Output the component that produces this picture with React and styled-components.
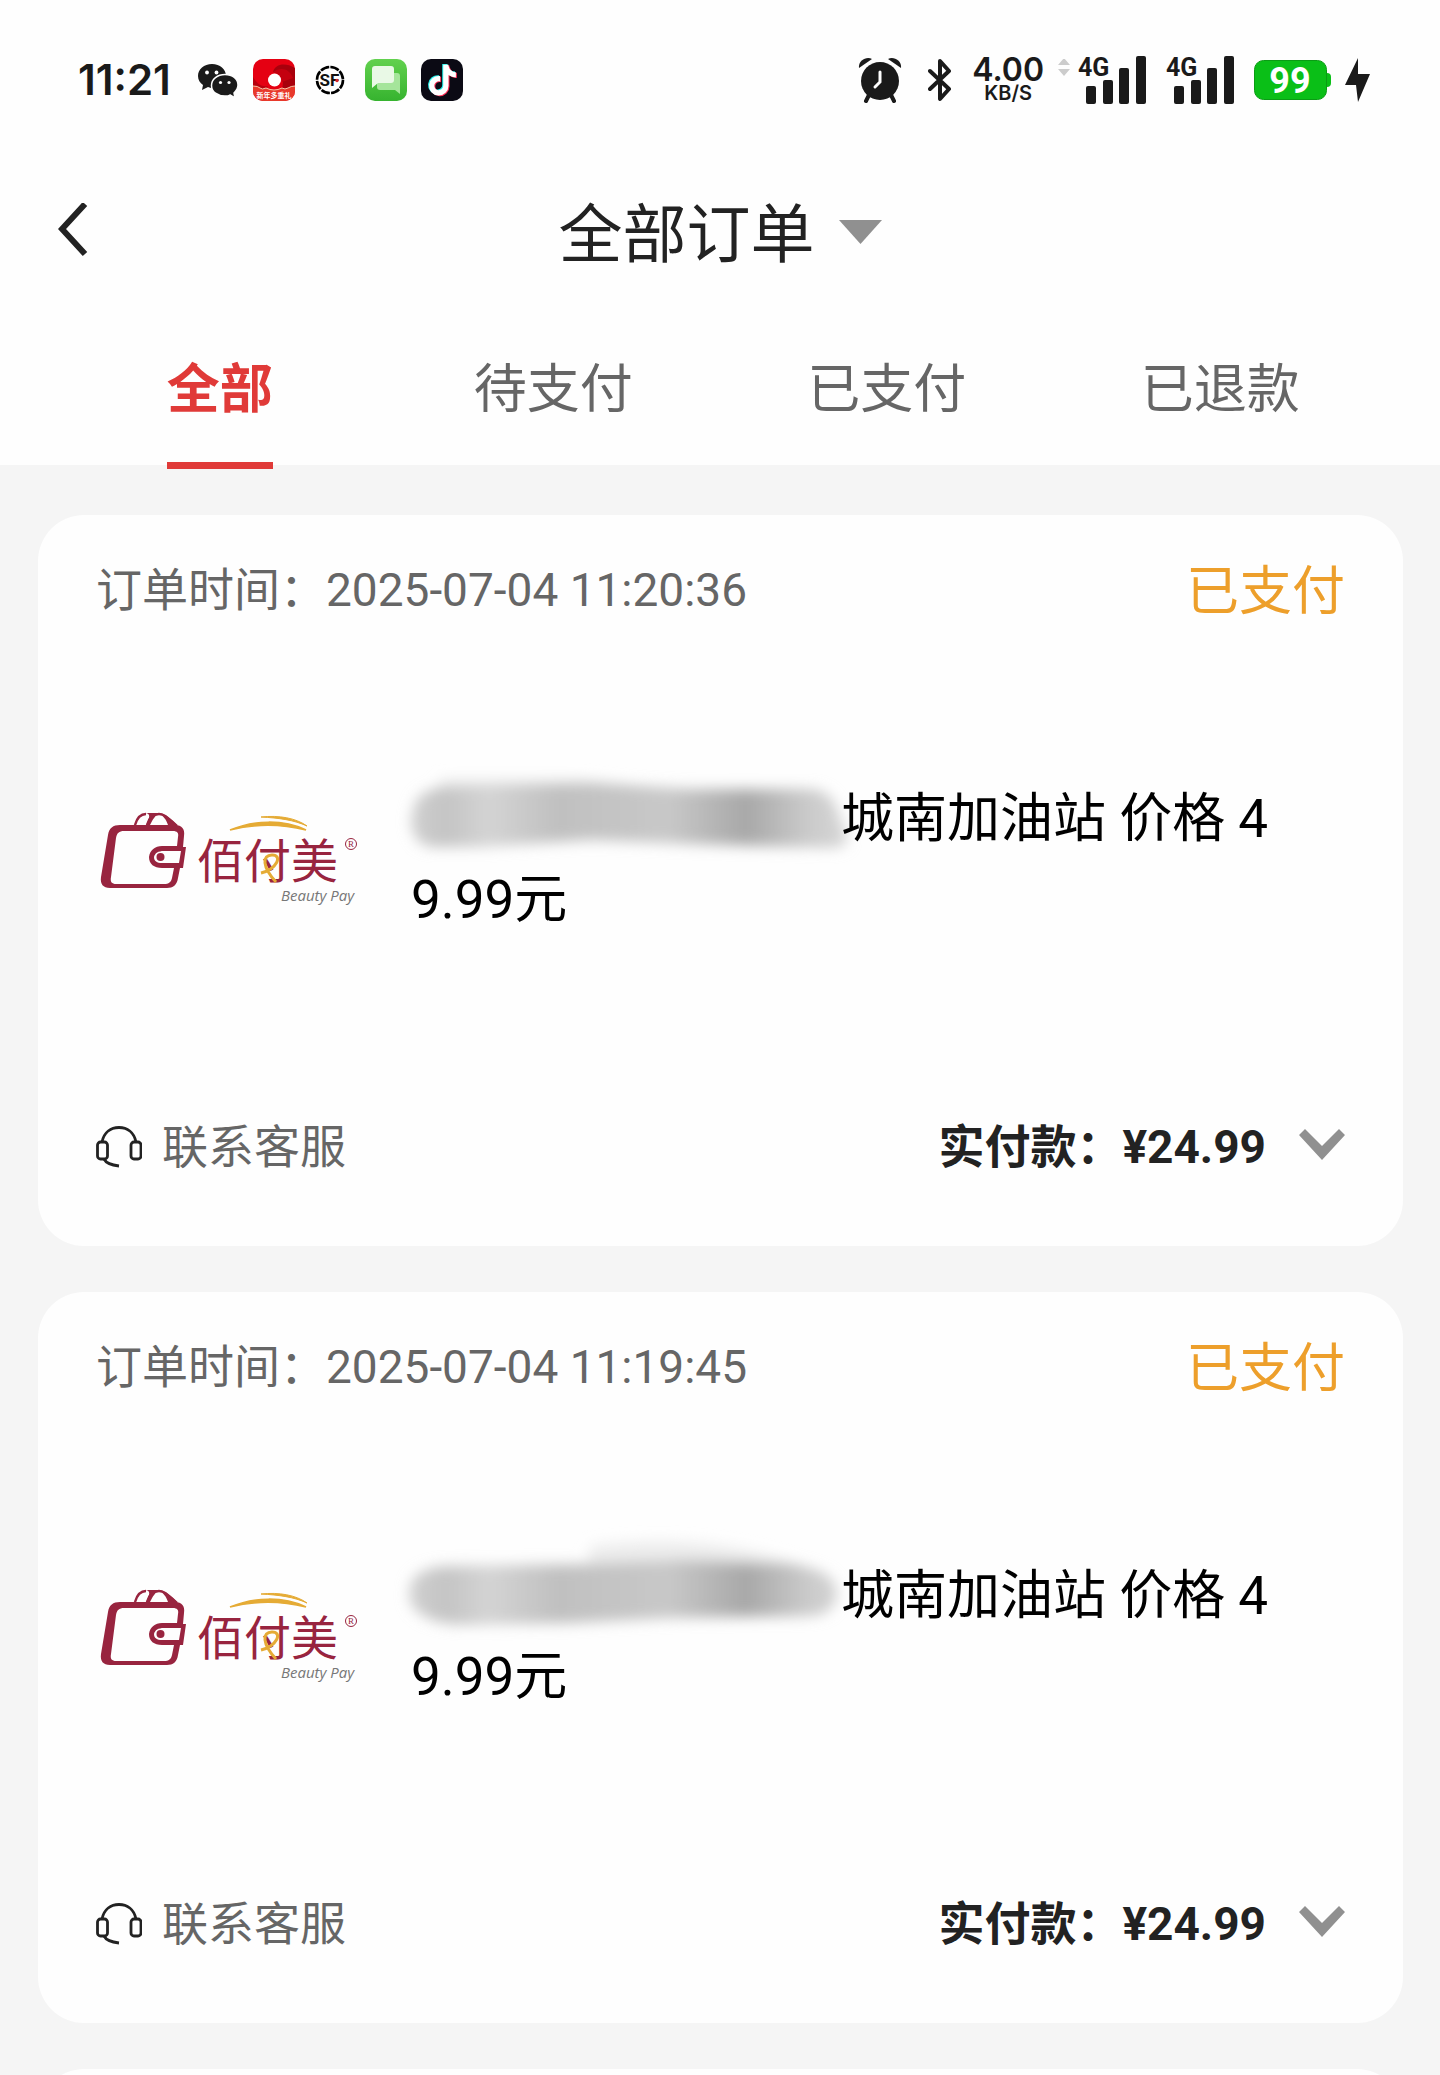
import React, { useState } from 'react'
import styled, { createGlobalStyle } from 'styled-components'

const GlobalStyle = createGlobalStyle`
  * {
    box-sizing: border-box;
  }
  body {
    margin: 0;
    background: #f5f5f5;
    font-family: Roboto, "Noto Sans CJK SC", sans-serif;
  }
  button {
    border: 0;
    padding: 0;
    background: none;
    font: inherit;
    color: inherit;
    cursor: pointer;
  }
  svg {
    display: block;
    flex-shrink: 0;
  }
`

const Page = styled.div`
  height: 100vh;
  display: flex;
  flex-direction: column;
  overflow: hidden;
`

const Header = styled.header`
  flex-shrink: 0;
  background: #fefefe;
`

const StatusBar = styled.div`
  display: flex;
  align-items: center;
  justify-content: space-between;
  height: 160px;
  padding: 0 70px 0 78px;
  font-family: Inter, sans-serif;
  color: #1a1a1a;
`

const StatusGroup = styled.div`
  display: flex;
  align-items: center;
  gap: ${({ $gap }) => $gap}px;
`

const Clock = styled.time`
  margin-right: 12px;
  font-size: 42px;
  font-weight: 600;
  line-height: 48px;
`

const NetSpeed = styled.div`
  display: flex;
  flex-direction: column;
  align-items: center;
  font-weight: 600;
`

const SpeedValue = styled.span`
  font-size: 32px;
  line-height: 26px;
`

const SpeedUnit = styled.span`
  font-size: 20px;
  line-height: 20px;
`

const NavBar = styled.div`
  display: grid;
  grid-template-columns: 1fr auto 1fr;
  align-items: center;
  height: 146px;
  padding: 0 58px;
`

const BackButton = styled.button`
  justify-self: start;
`

const Title = styled.h1`
  margin: 0;
  padding-top: 6px;
  font-size: 64px;
  font-weight: 400;
  line-height: 80px;
  color: #222;
`

const TitleButton = styled.button`
  display: flex;
  align-items: center;
  gap: 24px;

  svg {
    margin-bottom: 8px;
  }
`

const Tabs = styled.div`
  display: grid;
  grid-template-columns: repeat(4, 1fr);
  justify-items: center;
  padding: 0 53px;
`

const Tab = styled.button`
  position: relative;
  height: 159px;
  padding-bottom: 2px;
  font-size: 53px;
  font-weight: ${({ $active }) => ($active ? 700 : 400)};
  color: ${({ $active }) => ($active ? '#e03a38' : '#666')};

  &::after {
    content: "";
    display: ${({ $active }) => ($active ? 'block' : 'none')};
    position: absolute;
    left: 0;
    right: 0;
    bottom: -4px;
    height: 7px;
    background: #e03a38;
  }
`

const OrderList = styled.main`
  flex: 1;
  display: flex;
  flex-direction: column;
  gap: 46px;
  min-height: 0;
  padding: 50px 37px 0 38px;
  overflow: hidden;
`

const Card = styled.article`
  flex-shrink: 0;
  min-height: 731px;
  padding: 36px 58px 60px;
  border-radius: 46px;
  background: #fefefe;
`

const CardRow = styled.div`
  display: flex;
  align-items: center;
  justify-content: space-between;
  font-size: 46px;
  line-height: 78px;
  color: #666;
`

const OrderStatus = styled.span`
  padding-top: 4px;
  font-size: 53px;
  line-height: 74px;
  color: #ed9f2b;
`

const Product = styled.div`
  display: flex;
  align-items: center;
  gap: 53px;
  min-height: 260px;
  margin: 101px 0 118px;
`

const ProductName = styled.p`
  flex: 1;
  margin: 0;
  padding-right: 58px;
  font-size: 53px;
  line-height: 81px;
  word-break: break-all;
  color: #000;

  svg {
    display: inline-block;
    vertical-align: middle;
    overflow: visible;
  }
`

const ServiceButton = styled.button`
  display: flex;
  align-items: center;
  gap: 20px;
`

const PaidButton = styled.button`
  display: flex;
  align-items: center;
  gap: 33px;
  font-weight: 700;
  color: #222;

  svg {
    margin-bottom: 6px;
  }
`

const WechatIcon = () => (
  <svg width="42" height="42" viewBox="0 0 42 42" fill="#1a1a1a">
    <path d="M15 5C7 5 1 10 1 17c0 4 2 7 5 9l-1 5 6-3c2 1 4 1 6 1C24 28 29 24 29 17S23 5 15 5z" />
    <path d="M28 15.500C20.500 15.500 14.500 20 14.500 26.500S20.500 37 28 37c2 0 3.500 0 5-1l5 3-1-5c2-2 4-4.500 4-8C41 20 35.500 15.500 28 15.500z" stroke="#fefefe" strokeWidth="1.500" />
    <circle cx="10" cy="13.500" r="1.900" fill="#fefefe" />
    <circle cx="19.500" cy="13.500" r="1.900" fill="#fefefe" />
    <circle cx="23.500" cy="23.500" r="1.600" fill="#fefefe" />
    <circle cx="32" cy="23.500" r="1.600" fill="#fefefe" />
  </svg>
)

const PromoIcon = () => (
  <svg width="42" height="42" viewBox="0 0 42 42">
    <clipPath id="promo-clip"><rect width="42" height="42" rx="10" /></clipPath>
    <g clipPath="url(#promo-clip)">
      <rect width="42" height="42" fill="#e50012" />
      <path d="M20 13C22 5 32 3 42 9v20H29c3-7-1-14-9-16z" fill="#a8000c" />
      <path d="M20 13c8-6 17-3 20 6l-11 4c0-5-4-9-9-10z" fill="#c4000f" />
      <path d="M0 18c5 8 9 10 15 9l-3 4H0z" fill="#b8000e" />
      <path d="M0 27q5 0 7 2t6 0q8 4 16 0 3 2 6 0t7-2v15H0z" fill="#e8392b" />
      <path d="M0 27q5 0 7 2t6 0q8 4 16 0 3 2 6 0t7-2" fill="none" stroke="#f5c7a9" strokeWidth="1" />
      <circle cx="21.500" cy="21" r="6.500" fill="#fff" />
      <text x="21" y="39" textAnchor="middle" fontSize="7" fontWeight="700" fontFamily="Noto Sans CJK SC" fill="#fff">新年多重礼</text>
    </g>
  </svg>
)

const SfIcon = () => (
  <svg width="42" height="42" viewBox="0 0 42 42">
    <circle cx="21" cy="21" r="13" fill="none" stroke="#000" strokeWidth="2.600" strokeDasharray="9 1.210" />
    <text x="20.500" y="27" textAnchor="middle" fontSize="17" fontWeight="700" fontFamily="Roboto" fill="#111">SF</text>
    <circle cx="28" cy="21.500" r="1.700" fill="#d8232a" />
  </svg>
)

const MessageIcon = () => (
  <svg width="42" height="42" viewBox="0 0 42 42">
    <defs>
      <linearGradient id="msg" x1="0" y1="0" x2="0" y2="1">
        <stop offset="0" stopColor="#62d14e" />
        <stop offset="1" stopColor="#36b32f" />
      </linearGradient>
    </defs>
    <rect width="42" height="42" rx="10" fill="url(#msg)" />
    <path d="M15 14h17a3 3 0 0 1 3 3v18l-5-4H15a3 3 0 0 1-3-3V17a3 3 0 0 1 3-3z" fill="#a5e59b" />
    <path d="M10 7h16a3 3 0 0 1 3 3v11a3 3 0 0 1-3 3H13l-6 5V10a3 3 0 0 1 3-3z" fill="#e9f9e6" />
  </svg>
)

const NOTE = 'M448 209.910a210.060 210.060 0 0 1-122.770-39.250V349.380A162.550 162.550 0 1 1 185 188.310V278.200a74.620 74.620 0 1 0 52.230 71.180V0h88a121.180 121.180 0 0 0 1.860 22.170A122.180 122.180 0 0 0 381 102.390a121.430 121.430 0 0 0 67 20.140z'

const DouyinIcon = () => (
  <svg width="42" height="42" viewBox="0 0 42 42">
    <rect width="42" height="42" rx="10" fill="#0b0a14" />
    <path d={NOTE} transform="translate(7 5) scale(.06)" fill="#25f4ee" />
    <path d={NOTE} transform="translate(9 6.500) scale(.06)" fill="#fe2c55" />
    <path d={NOTE} transform="translate(8 5.800) scale(.06)" fill="#fff" />
  </svg>
)

const AlarmIcon = () => (
  <svg width="44" height="46" viewBox="0 0 44 46" fill="#1a1a1a">
    <path d="M1 11C0 4 8-1 14 2z" />
    <path d="M43 11C44 4 36-1 30 2z" />
    <path d="M11 38l-3 6M33 38l3 6" stroke="#1a1a1a" strokeWidth="4" strokeLinecap="round" />
    <circle cx="22" cy="24" r="19" />
    <path d="M22 15v10l-5 5" fill="none" stroke="#fefefe" strokeWidth="3" strokeLinecap="round" />
  </svg>
)

const BluetoothIcon = () => (
  <svg width="24" height="44" viewBox="0 0 24 44" fill="none" stroke="#1a1a1a" strokeWidth="4" strokeLinejoin="round" strokeLinecap="round">
    <path d="M2 13l19 18-9 10V3l9 10L2 31" />
  </svg>
)

const TrafficArrows = () => (
  <svg width="12" height="42" viewBox="0 0 12 42" fill="#ccc">
    <path d="M0 6l6-7 6 7zM0 10l6 7 6-7z" />
  </svg>
)

const SignalIcon = () => (
  <svg width="68" height="54" viewBox="0 -4 68 54" fill="#1a1a1a">
    <text x="0" y="19" fontSize="25" fontWeight="700" fontFamily="Roboto">4G</text>
    <rect x="8" y="29" width="10" height="18" rx="2" />
    <rect x="25" y="23" width="10" height="24" rx="2" />
    <rect x="41" y="11" width="10" height="36" rx="2" />
    <rect x="58" y="-1" width="10" height="48" rx="2" />
  </svg>
)

const BatteryIcon = () => (
  <svg width="77" height="40" viewBox="0 0 77 40">
    <rect x="68" y="13" width="9" height="14" rx="4" fill="#0abf17" />
    <rect x=".5" y=".5" width="72" height="39" rx="9" fill="#0abf17" stroke="#0a9c14" />
    <text x="36" y="33" textAnchor="middle" fontSize="36" fontWeight="700" fontFamily="Roboto" fill="#fff">99</text>
  </svg>
)

const BoltIcon = () => (
  <svg width="25" height="44" viewBox="0 0 25 44" fill="#1a1a1a">
    <path d="M13 0L0 27h11l2 17 12-28H13z" />
  </svg>
)

const HeadsetIcon = () => (
  <svg width="46" height="42" viewBox="0 0 46 42" fill="none" stroke="#222" strokeWidth="2.800">
    <path d="M6 16C8 6 15 1.500 23 1.500S38 6 40 16" />
    <rect x="1.500" y="16" width="10" height="17" rx="3" />
    <rect x="35" y="16" width="10" height="17" rx="3" />
    <path d="M8 33c2 4 6 6 15 7" />
  </svg>
)

const BeautyPayLogo = () => (
  <svg width="262" height="140" viewBox="0 0 262 140" role="img">
    {/* wallet */}
    <path d="M39 35c2-7 5-11 11-11M51 35c2-7 6-11 12-11 5 0 8 3 18 12" fill="none" stroke="#98243f" strokeWidth="2.500" />
    <path d="M49 23c6 0 5 5 1 12h4c3-6 5-9 9-12z" fill="#98243f" />
    <path d="M63 23c5 0 12 6 18 12h-9c-2-6-5-9-9-12z" fill="#98243f" />
    <path
      fillRule="evenodd"
      fill="#98243f"
      d="M24 35H79C86 35 89 39 88 46L87 57H90L87 78H84L82 88C81 95 77 98 71 98H14C7 98 4 94 5 87L12 45C13 38 17 35 24 35ZM28 41C23 41 21 43 20 48L15 87C14 92 16 94 20 94H68C73 94 75 92 76 88L78 78H66C58 78 53 74 53 67 54 60 59 56 66 56H81L82 47C83 43 81 41 77 41ZM68 61H85L83 73H66C61 73 58 71 58 67 59 63 62 61 68 61Z"
    />
    <circle cx="64.500" cy="67" r="4" fill="#98243f" />
    {/* lettering */}
    <text x="101" y="88" fontSize="47" fontFamily="Noto Sans CJK SC" fill="#98243f">佰付美</text>
    <path d="M134 40c24-10 53-11 76 0-24-6-52-6-76 0z" fill="#e5ab35" stroke="#e5ab35" strokeWidth="1.500" />
    <path d="M165 27c18-2 35 1 46 9-13-6-28-8-46-9z" fill="#e5ab35" stroke="#e5ab35" />
    <path d="M165 83c16-4 22-18 11-18-10 0-10 12 4 27" fill="none" stroke="#e5ab35" strokeWidth="3" />
    <circle cx="255" cy="54" r="5.500" fill="none" stroke="#98243f" />
    <text x="255" y="57" textAnchor="middle" fontSize="9" fontFamily="Liberation Serif" fill="#98243f">R</text>
    <text x="185" y="111" fontSize="15" fontStyle="italic" fontFamily="Open Sans" fill="#777">Beauty Pay</text>
  </svg>
)

const SMUDGES = [
  {
    haze: 'M30-10H170L260 0H400L430 30H20z',
    body: 'M4 14Q10 2 30-2L180-6 280 0H400Q420 2 426 20L436 48Q438 58 420 59L280 55 180 51 70 58H20Q0 54 0 30z',
  },
  {
    haze: 'M180-20Q290-34 380-4L410 20H170z',
    body: 'M0 16Q10 0 40 0L180-2 270-6 380-2Q426 4 426 28 424 48 400 50L260 52 160 57 50 59Q4 56-2 32z',
  },
]

// painted-over part of the product name
const Smudge = ({ id }) => (
  <svg width="430" height="53" viewBox="0 8 430 53" aria-hidden="true">
    <defs>
      <linearGradient id={`ink${id}`} gradientUnits="userSpaceOnUse" x1="0" y1="0" x2="430" y2="0">
        <stop offset="0" stopColor="#d0d0d0" />
        <stop offset=".08" stopColor="#c4c4c4" />
        <stop offset=".18" stopColor="#d4d4d4" />
        <stop offset=".34" stopColor="#c0c0c0" />
        <stop offset=".6" stopColor="#c8c8c8" />
        <stop offset=".78" stopColor="#a8a8a8" />
        <stop offset=".92" stopColor="#cacaca" />
        <stop offset="1" stopColor="#d4d4d4" />
      </linearGradient>
      <filter id={`soft${id}`} x="-10%" y="-50%" width="120%" height="200%">
        <feGaussianBlur stdDeviation="7" />
      </filter>
    </defs>
    <g filter={`url(#soft${id})`}>
      <path d={SMUDGES[id].haze} fill="#ececec" />
      <path d={SMUDGES[id].body} fill={`url(#ink${id})`} />
    </g>
  </svg>
)

const tabs = ['全部', '待支付', '已支付', '已退款']

const orders = [
  { time: '2025-07-04 11:20:36', status: '已支付', name: '城南加油站 价格 49.99元', paid: '24.99' },
  { time: '2025-07-04 11:19:45', status: '已支付', name: '城南加油站 价格 49.99元', paid: '24.99' },
]

const Order = ({ order, index }) => (
  <Card>
    <CardRow>
      <span>订单时间：{order.time}</span>
      <OrderStatus>{order.status}</OrderStatus>
    </CardRow>
    <Product>
      <BeautyPayLogo />
      <ProductName>
        <Smudge id={index} />
        {order.name}
      </ProductName>
    </Product>
    <CardRow>
      <ServiceButton>
        <HeadsetIcon />
        联系客服
      </ServiceButton>
      <PaidButton>
        <span>实付款：¥{order.paid}</span>
        <svg width="46" height="31" viewBox="0 0 46 31" fill="#909090">
          <path d="M0 6l6-6 17 17L40 0l6 6-23 25z" />
        </svg>
      </PaidButton>
    </CardRow>
  </Card>
)

const App = () => {
  const [active, setActive] = useState(0)

  return (
    <Page>
      <GlobalStyle />
      <Header>
        <StatusBar>
          <StatusGroup $gap={14}>
            <Clock>11:21</Clock>
            <WechatIcon />
            <PromoIcon />
            <SfIcon />
            <MessageIcon />
            <DouyinIcon />
          </StatusGroup>
          <StatusGroup $gap={20}>
            <StatusGroup $gap={26}>
              <AlarmIcon />
              <BluetoothIcon />
            </StatusGroup>
            <StatusGroup $gap={8}>
              <StatusGroup $gap={14}>
                <NetSpeed>
                  <SpeedValue>4.00</SpeedValue>
                  <SpeedUnit>KB/S</SpeedUnit>
                </NetSpeed>
                <TrafficArrows />
              </StatusGroup>
              <SignalIcon />
            </StatusGroup>
            <SignalIcon />
            <StatusGroup $gap={14}>
              <BatteryIcon />
              <BoltIcon />
            </StatusGroup>
          </StatusGroup>
        </StatusBar>
        <NavBar>
          <BackButton aria-label="返回">
            <svg width="30" height="60" viewBox="0 0 30 60" fill="none" stroke="#222" strokeWidth="6">
              <path d="M27 1L4 26l23 25" />
            </svg>
          </BackButton>
          <Title>
            <TitleButton aria-haspopup="listbox">
              全部订单
              <svg width="43" height="24" viewBox="0 0 43 24" fill="#909090">
                <path d="M0 0h43L21.500 24z" />
              </svg>
            </TitleButton>
          </Title>
        </NavBar>
        <Tabs role="tablist">
          {tabs.map((tab, index) => (
            <Tab
              key={tab}
              role="tab"
              aria-selected={index === active}
              $active={index === active}
              onClick={() => setActive(index)}
            >
              {tab}
            </Tab>
          ))}
        </Tabs>
      </Header>
      <OrderList>
        {orders.map((order, index) => (
          <Order key={order.time} order={order} index={index} />
        ))}
        <Card />
      </OrderList>
    </Page>
  )
}

export default App
